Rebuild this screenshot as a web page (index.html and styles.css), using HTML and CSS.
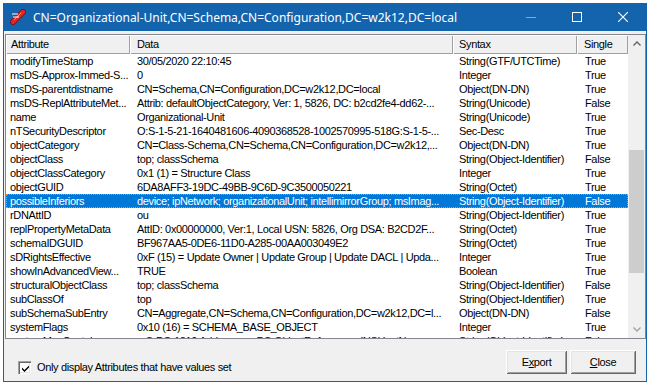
FILE: index.html
```html
<!DOCTYPE html>
<html>
<head>
<meta charset="utf-8">
<link rel="stylesheet" href="styles.css">
</head>
<body>
<div class="window">
  <div class="titlebar">
    <svg class="app-icon" width="16" height="16" viewBox="0 0 16 16">
      <line x1="3" y1="13" x2="13" y2="3" stroke="#7a0d0d" stroke-width="6" stroke-linecap="round"/>
      <line x1="3" y1="13" x2="13" y2="3" stroke="#e02828" stroke-width="4.4" stroke-linecap="round"/>
      <line x1="4.5" y1="10.5" x2="11" y2="4" stroke="#ff8c8c" stroke-width="1" stroke-linecap="round"/>
      <line x1="2" y1="5" x2="8" y2="5" stroke="#ffffff" stroke-width="1"/>
      <line x1="3" y1="8" x2="9" y2="8" stroke="#ffffff" stroke-width="1"/>
    </svg>
    <span class="title">CN=Organizational-Unit,CN=Schema,CN=Configuration,DC=w2k12,DC=local</span>
    <div class="controls">
      <span class="ctl"><svg width="10" height="10" viewBox="0 0 10 10"><line x1="0" y1="5.5" x2="10" y2="5.5" stroke="rgba(255,255,255,0.45)" stroke-width="1"/></svg></span>
      <span class="ctl"><svg width="10" height="10" viewBox="0 0 10 10"><rect x="0.5" y="0.5" width="9" height="9" fill="none" stroke="#fff" stroke-width="1"/></svg></span>
      <span class="ctl"><svg width="10" height="10" viewBox="0 0 10 10"><path d="M0 0 L10 10 M10 0 L0 10" stroke="#fff" stroke-width="1.1"/></svg></span>
    </div>
  </div>
  <div class="content">
    <div class="list">
      <div class="list-main">
        <div class="header">
          <div class="hcell c1">Attribute</div>
          <div class="hcell c2">Data</div>
          <div class="hcell c3">Syntax</div>
          <div class="hcell c4">Single</div>
        </div>
        <div class="rows">
          <div class="row"><span class="c1">modifyTimeStamp</span><span class="c2">30/05/2020 22:10:45</span><span class="c3">String(GTF/UTCTime)</span><span class="c4">True</span></div>
          <div class="row"><span class="c1">msDS-Approx-Immed-S...</span><span class="c2">0</span><span class="c3">Integer</span><span class="c4">True</span></div>
          <div class="row"><span class="c1">msDS-parentdistname</span><span class="c2">CN=Schema,CN=Configuration,DC=w2k12,DC=local</span><span class="c3">Object(DN-DN)</span><span class="c4">True</span></div>
          <div class="row"><span class="c1">msDS-ReplAttributeMet...</span><span class="c2">Attrib: defaultObjectCategory, Ver: 1, 5826, DC: b2cd2fe4-dd62-...</span><span class="c3">String(Unicode)</span><span class="c4">False</span></div>
          <div class="row"><span class="c1">name</span><span class="c2">Organizational-Unit</span><span class="c3">String(Unicode)</span><span class="c4">True</span></div>
          <div class="row"><span class="c1">nTSecurityDescriptor</span><span class="c2">O:S-1-5-21-1640481606-4090368528-1002570995-518G:S-1-5-...</span><span class="c3">Sec-Desc</span><span class="c4">True</span></div>
          <div class="row"><span class="c1">objectCategory</span><span class="c2">CN=Class-Schema,CN=Schema,CN=Configuration,DC=w2k12,...</span><span class="c3">Object(DN-DN)</span><span class="c4">True</span></div>
          <div class="row"><span class="c1">objectClass</span><span class="c2">top; classSchema</span><span class="c3">String(Object-Identifier)</span><span class="c4">False</span></div>
          <div class="row"><span class="c1">objectClassCategory</span><span class="c2">0x1 (1) = Structure Class</span><span class="c3">Integer</span><span class="c4">True</span></div>
          <div class="row"><span class="c1">objectGUID</span><span class="c2">6DA8AFF3-19DC-49BB-9C6D-9C3500050221</span><span class="c3">String(Octet)</span><span class="c4">True</span></div>
          <div class="row selected"><span class="c1">possibleInferiors</span><span class="c2">device; ipNetwork; organizationalUnit; intellimirrorGroup; msImag...</span><span class="c3">String(Object-Identifier)</span><span class="c4">False</span></div>
          <div class="row"><span class="c1">rDNAttID</span><span class="c2">ou</span><span class="c3">String(Object-Identifier)</span><span class="c4">True</span></div>
          <div class="row"><span class="c1">replPropertyMetaData</span><span class="c2">AttID: 0x00000000, Ver:1, Local USN: 5826, Org DSA: B2CD2F...</span><span class="c3">String(Octet)</span><span class="c4">True</span></div>
          <div class="row"><span class="c1">schemaIDGUID</span><span class="c2">BF967AA5-0DE6-11D0-A285-00AA003049E2</span><span class="c3">String(Octet)</span><span class="c4">True</span></div>
          <div class="row"><span class="c1">sDRightsEffective</span><span class="c2">0xF (15) = Update Owner | Update Group | Update DACL | Upda...</span><span class="c3">Integer</span><span class="c4">True</span></div>
          <div class="row"><span class="c1">showInAdvancedView...</span><span class="c2">TRUE</span><span class="c3">Boolean</span><span class="c4">True</span></div>
          <div class="row"><span class="c1">structuralObjectClass</span><span class="c2">top; classSchema</span><span class="c3">String(Object-Identifier)</span><span class="c4">False</span></div>
          <div class="row"><span class="c1">subClassOf</span><span class="c2">top</span><span class="c3">String(Object-Identifier)</span><span class="c4">True</span></div>
          <div class="row"><span class="c1">subSchemaSubEntry</span><span class="c2">CN=Aggregate,CN=Schema,CN=Configuration,DC=w2k12,DC=l...</span><span class="c3">Object(DN-DN)</span><span class="c4">False</span></div>
          <div class="row"><span class="c1">systemFlags</span><span class="c2">0x10 (16) = SCHEMA_BASE_OBJECT</span><span class="c3">Integer</span><span class="c4">True</span></div>
          <div class="row"><span class="c1">systemMayContain</span><span class="c2">mS-DS-1310 Address; msDS-ObjectReference; dNSHostName; ...</span><span class="c3">String(Object-Identifier)</span><span class="c4">False</span></div>
        </div>
      </div>
      <div class="scrollbar">
        <div class="sb-btn"><svg width="8" height="5" viewBox="0 0 8 5"><path d="M0.5 4.5 L4 1 L7.5 4.5" fill="none" stroke="#606060" stroke-width="1.3"/></svg></div>
        <div class="sb-track"><div class="sb-thumb"></div></div>
        <div class="sb-btn"><svg width="8" height="5" viewBox="0 0 8 5"><path d="M0.5 0.5 L4 4 L7.5 0.5" fill="none" stroke="#a0a0a0" stroke-width="1.3"/></svg></div>
      </div>
    </div>
    <div class="footer">
      <label class="check">
        <span class="box"><svg width="9" height="9" viewBox="0 0 9 9"><path d="M1 3.5 L3.5 6 L8 1.5 L8 3.5 L3.5 8 L1 5.5 Z" fill="#000"/></svg></span>
        <span>Only display Attributes that have values set</span>
      </label>
      <div class="buttons">
        <button class="btn export">E<u>x</u>port</button>
        <button class="btn close"><u>C</u>lose</button>
      </div>
    </div>
  </div>
</div>
</body>
</html>
```
FILE: styles.css
```css
html, body {
  margin: 0;
  padding: 0;
}
body {
  background: #ffffff;
  font-family: "Liberation Sans", Arial, sans-serif;
  font-size: 11px;
  letter-spacing: -0.35px;
  color: #000;
  overflow: hidden;
}
.window {
  margin: 3px 0 0 3px;
  width: 644px;
  height: 379px;
  box-sizing: border-box;
  border: 1px solid #1464ad;
  border-top: none;
  background: #f0f0f0;
  display: flex;
  flex-direction: column;
}
.titlebar {
  height: 28px;
  flex: none;
  background: #1464ad;
  color: #fff;
  display: flex;
  align-items: center;
}
.app-icon {
  margin-left: 6px;
  flex: none;
}
.title {
  margin-left: 7px;
  font-family: "Noto Sans", "Open Sans", sans-serif;
  font-size: 12px;
  letter-spacing: 0;
  white-space: nowrap;
}
.controls {
  margin-left: auto;
  display: flex;
  height: 28px;
}
.ctl {
  width: 46px;
  display: flex;
  align-items: center;
  justify-content: center;
}
.content {
  flex: 1;
  padding: 3px 0 0 1px;
  display: flex;
  flex-direction: column;
}
.list {
  width: 641px;
  height: 305px;
  box-sizing: border-box;
  border: 1px solid #828790;
  background: #fff;
  display: flex;
  flex: none;
}
.list-main {
  width: 622px;
  overflow: hidden;
}
.header, .row {
  display: grid;
  grid-template-columns: 124px 323px 124px 51px;
}
.header {
  height: 19px;
}
.hcell {
  background: #f0f0f0;
  box-shadow: inset 1px 1px 0 #ffffff, inset -1px -1px 0 #a0a0a0;
  line-height: 18px;
  white-space: nowrap;
  overflow: hidden;
}
.hcell.c1 { padding-left: 5px; }
.hcell.c2 { padding-left: 7px; }
.hcell.c3 { padding-left: 6px; }
.hcell.c4 { padding-left: 7px; }
.row {
  height: 14px;
  line-height: 14px;
  white-space: nowrap;
}
.row span {
  overflow: hidden;
}
.row .c1 { padding-left: 4px; }
.row .c2 { padding-left: 7px; }
.row .c3 { padding-left: 6px; }
.row .c4 { padding-left: 8px; }
.row.selected {
  background: #0078d7;
  color: #fff;
  outline: 1px dotted #f08a24;
  outline-offset: -1px;
}
.scrollbar {
  width: 17px;
  background: #f0f0f0;
  display: flex;
  flex-direction: column;
}
.sb-btn {
  height: 17px;
  flex: none;
  display: flex;
  align-items: center;
  justify-content: center;
}
.sb-track {
  flex: 1;
}
.sb-thumb {
  margin: 98px 1px 0 1px;
  height: 123px;
  background: #cdcdcd;
}
.footer {
  flex: 1;
  display: flex;
  align-items: flex-start;
  padding-left: 13px;
}
.check {
  margin-top: 22px;
  display: flex;
  align-items: center;
  gap: 6px;
  line-height: 13px;
}
.box {
  width: 13px;
  height: 13px;
  box-sizing: border-box;
  background: #fff;
  box-shadow: inset 1px 1px 0 #a0a0a0, inset 2px 2px 0 #696969, inset -1px -1px 0 #ffffff, inset -2px -2px 0 #e3e3e3;
  display: flex;
  align-items: center;
  justify-content: center;
  padding: 1px 0 0 1px;
}
.buttons {
  margin-left: auto;
  margin-right: 10px;
  margin-top: 11px;
  display: flex;
  gap: 3px;
}
.btn {
  height: 24px;
  padding: 0;
  border: none;
  background: #f0f0f0;
  font-family: "Liberation Sans", Arial, sans-serif;
  font-size: 11px;
  letter-spacing: -0.35px;
  color: #000;
  box-shadow: inset 1px 1px 0 #ffffff, inset -1px -1px 0 #696969, inset 2px 2px 0 #e3e3e3, inset -2px -2px 0 #a0a0a0;
}
.btn.export { width: 61px; }
.btn.close { width: 66px; }
```
